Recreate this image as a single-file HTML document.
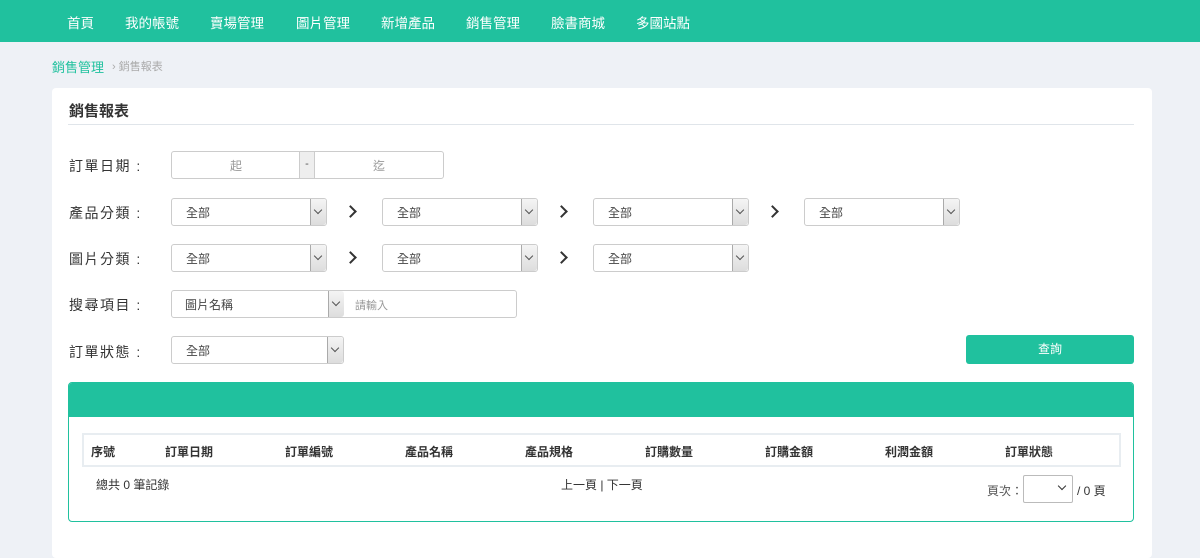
<!DOCTYPE html>
<html><head><meta charset="utf-8"><style>
*{box-sizing:border-box;margin:0;padding:0}
body{width:1200px;height:548px;overflow:hidden;background:#eef1f6;font-family:"Liberation Sans","Noto Sans CJK TC",sans-serif;color:#333;position:relative}
.a{position:absolute}
.nav{left:0;top:0;width:1200px;height:42px;background:#20c19e}
.nav span{position:absolute;top:12px;color:#fff;font-size:13.5px}
.card{left:52px;top:88px;width:1100px;height:470px;background:#fff;border-radius:4px}
.lbl{font-size:14px;color:#333;left:69px;letter-spacing:1.5px}
.box{border:1px solid #ccc;border-radius:3px;background:#fff;height:28px;font-size:12px;color:#555}
.sel .t{position:absolute;left:14px;top:5px;font-size:12px;color:#444}
.sel .b{position:absolute;right:0;top:0;width:16px;height:26px;background:linear-gradient(#f4f4f4,#ddd);border-left:1px solid #aaa;border-radius:0 3px 3px 0}
.sel .b:after{content:"";position:absolute;left:4px;top:8px;width:5px;height:5px;border-right:1.5px solid #555;border-bottom:1.5px solid #555;transform:rotate(45deg)}
.arr{width:9px;height:9px;border-right:2px solid #333;border-top:2px solid #333;transform:rotate(45deg)}
.th{position:absolute;top:443px;font-size:12px;color:#333;font-weight:600}
</style></head><body>
<div class="a nav">
<span style="left:67px">首頁</span><span style="left:125px">我的帳號</span><span style="left:210px">賣場管理</span><span style="left:296px">圖片管理</span><span style="left:381px">新增產品</span><span style="left:466px">銷售管理</span><span style="left:551px">臉書商城</span><span style="left:636px">多國站點</span>
</div>
<div class="a" style="left:52px;top:57px;font-size:13px;color:#20c19e">銷售管理</div>
<div class="a" style="left:112px;top:58px;font-size:11px;color:#aaa">› 銷售報表</div>
<div class="a card"></div>
<div class="a" style="left:69px;top:100px;font-size:15px;font-weight:bold;color:#333">銷售報表</div>
<div class="a" style="left:68px;top:124px;width:1066px;height:1px;background:#e0e5ea"></div>

<div class="a lbl" style="top:156px">訂單日期 :</div>
<div class="a box" style="left:171px;top:151px;width:273px"></div>
<div class="a" style="left:299px;top:152px;width:16px;height:26px;background:#eee;border-left:1px solid #ccc;border-right:1px solid #ccc;font-size:11px;color:#555;text-align:center;line-height:24px">-</div>
<div class="a" style="left:230px;top:157px;font-size:12px;color:#999">起</div>
<div class="a" style="left:373px;top:157px;font-size:12px;color:#999">迄</div>

<div class="a lbl" style="top:203px">產品分類 :</div>
<div class="a box sel" style="left:171px;top:198px;width:156px"><span class="t">全部</span><span class="b"></span></div>
<div class="a arr" style="left:346px;top:207px"></div>
<div class="a box sel" style="left:382px;top:198px;width:156px"><span class="t">全部</span><span class="b"></span></div>
<div class="a arr" style="left:557px;top:207px"></div>
<div class="a box sel" style="left:593px;top:198px;width:156px"><span class="t">全部</span><span class="b"></span></div>
<div class="a arr" style="left:768px;top:207px"></div>
<div class="a box sel" style="left:804px;top:198px;width:156px"><span class="t">全部</span><span class="b"></span></div>

<div class="a lbl" style="top:249px">圖片分類 :</div>
<div class="a box sel" style="left:171px;top:244px;width:156px"><span class="t">全部</span><span class="b"></span></div>
<div class="a arr" style="left:346px;top:253px"></div>
<div class="a box sel" style="left:382px;top:244px;width:156px"><span class="t">全部</span><span class="b"></span></div>
<div class="a arr" style="left:557px;top:253px"></div>
<div class="a box sel" style="left:593px;top:244px;width:156px"><span class="t">全部</span><span class="b"></span></div>

<div class="a lbl" style="top:295px">搜尋項目 :</div>
<div class="a box" style="left:171px;top:290px;width:346px"></div>
<div class="a sel" style="left:171px;top:290px;width:173px;height:28px"><span class="t" style="top:6px">圖片名稱</span><span class="b" style="top:1px;right:0"></span></div>
<div class="a" style="left:355px;top:297px;font-size:11px;color:#999">請輸入</div>

<div class="a lbl" style="top:342px">訂單狀態 :</div>
<div class="a box sel" style="left:171px;top:336px;width:173px"><span class="t">全部</span><span class="b"></span></div>
<div class="a" style="left:966px;top:335px;width:168px;height:29px;background:#20c19e;border-radius:3px;color:#fff;font-size:12px;text-align:center;line-height:29px">查詢</div>

<div class="a" style="left:68px;top:382px;width:1066px;height:140px;border:1px solid #20c19e;border-radius:4px;overflow:hidden">
<div style="height:34px;background:#20c19e"></div></div>
<div class="a" style="left:82px;top:433px;width:1039px;height:34px;border:2px solid #e8edf1"></div>
<div class="th" style="left:91px">序號</div><div class="th" style="left:165px">訂單日期</div><div class="th" style="left:285px">訂單編號</div><div class="th" style="left:405px">產品名稱</div><div class="th" style="left:525px">產品規格</div><div class="th" style="left:645px">訂購數量</div><div class="th" style="left:765px">訂購金額</div><div class="th" style="left:885px">利潤金額</div><div class="th" style="left:1005px">訂單狀態</div>
<div class="a" style="left:96px;top:476px;font-size:12px">總共 0 筆記錄</div>
<div class="a" style="left:561px;top:476px;font-size:12px">上一頁 | 下一頁</div>
<div class="a" style="left:987px;top:482px;font-size:12px;color:#555">頁次：</div>
<div class="a" style="left:1023px;top:475px;width:50px;height:28px;border:1px solid #bbb;border-radius:2px;background:#fff"><span style="position:absolute;right:7px;top:7px;width:6px;height:6px;border-right:1.5px solid #333;border-bottom:1.5px solid #333;transform:rotate(45deg)"></span></div>
<div class="a" style="left:1077px;top:482px;font-size:12px;color:#333">/ 0 頁</div>
</body></html>
